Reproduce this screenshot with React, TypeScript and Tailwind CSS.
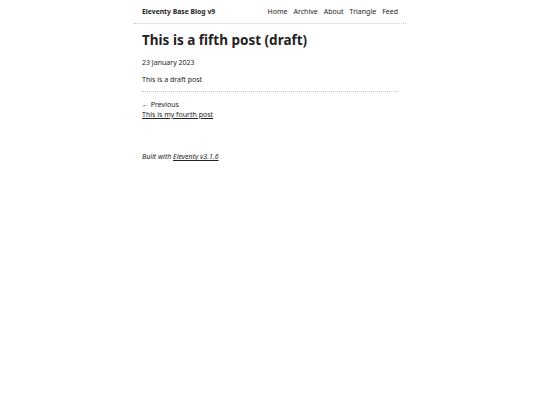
export default function App() {
  const nav = ['Home', 'Archive', 'About', 'Triangle', 'Feed']
  return (
    <div className="min-h-screen bg-white text-[#222] font-['Noto_Sans',sans-serif] text-[7px] leading-[1.45]">
      <div className="mx-auto w-[272px]">
        {/* Header */}
        <header className="flex items-center justify-between border-b border-dotted border-[#ccc] px-[8px] pt-[7px] pb-[6px]">
          <a className="font-bold text-[6.8px] text-[#222]">Eleventy Base Blog v9</a>
          <nav className="flex gap-[6px] text-[7px] text-[#222]">
            {nav.map((n) => (
              <a key={n}>{n}</a>
            ))}
          </nav>
        </header>

        {/* Post */}
        <main className="px-[8px]">
          <h1 className="mt-[8px] text-[13.5px] font-bold leading-[1.3] text-[#222]">This is a fifth post (draft)</h1>
          <p className="mt-[8px]">23 January 2023</p>
          <p className="mt-[7px]">This is a draft post</p>
          <hr className="mt-[6px] border-0 border-t border-dotted border-[#ccc]" />
          <div className="mt-[8px]">
            <p>← Previous</p>
            <a className="underline">This is my fourth post</a>
          </div>
        </main>

        <footer className="px-[8px] pt-[32px]">
          <p className="italic">
            Built with <a className="underline">Eleventy v3.1.6</a>
          </p>
        </footer>
      </div>
    </div>
  )
}
